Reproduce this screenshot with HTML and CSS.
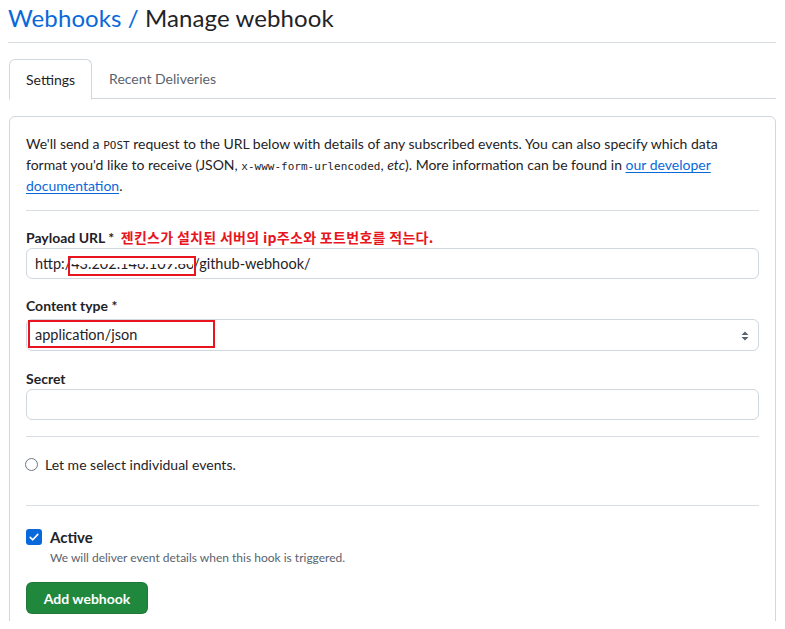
FILE: index.html
```html
<!DOCTYPE html>
<html>
<head>
<meta charset="utf-8">
<link rel="stylesheet" href="styles.css">
</head>
<body>
<div class="page">
  <h1 class="title"><span class="crumb">Webhooks /</span> Manage webhook</h1>
  <div class="tabs">
    <div class="tab active">Settings</div>
    <div class="tab">Recent Deliveries</div>
    <div class="tab-fill"></div>
  </div>
  <div class="box">
    <p class="intro">We'll send a <code>POST</code> request to the URL below with details of any subscribed events. You can also specify which data format you'd like to receive (JSON, <code>x-www-form-urlencoded</code>, <em>etc</em>). More information can be found in <a href="#">our developer documentation</a>.</p>
    <hr class="sep">
    <div class="group g1">
      <div class="label">Payload URL * <span class="note">젠킨스가 설치된 서버의 ip주소와 포트번호를 적는다.</span></div>
      <div class="input url">http:/<span class="ip"><span class="ip-text">43.202.146.109:8080</span><span class="mask"></span><span class="redbox"></span></span>/github-webhook/</div>
    </div>
    <div class="group g2">
      <div class="label">Content type *</div>
      <div class="input select"><span class="sel-val">application/json<span class="redbox2"></span></span>
        <svg class="caret" width="10" height="12" viewBox="0 0 10 12"><path d="M5 1.5 L8.5 5 H1.5 Z M1.5 7 H8.5 L5 10.5 Z" fill="#59636e"/></svg>
      </div>
    </div>
    <div class="group g3">
      <div class="label">Secret</div>
      <div class="input secret"></div>
    </div>
    <hr class="sep sep2">
    <div class="radio-row"><span class="radio"></span>Let me select individual events.</div>
    <hr class="sep sep3">
    <div class="check-row"><span class="check"><svg width="12" height="12" viewBox="0 0 12 12"><path d="M2.2 6.3 L4.8 8.8 L9.8 3.4" stroke="#fff" stroke-width="1.6" fill="none" stroke-linecap="round" stroke-linejoin="round"/></svg></span><span class="check-label">Active</span></div>
    <div class="desc">We will deliver event details when this hook is triggered.</div>
    <button class="btn">Add webhook</button>
  </div>
</div>
</body>
</html>
```
FILE: styles.css
```css
html, body { margin: 0; padding: 0; background: #fff; }
body {
  margin: 8px;
  font-family: "Lato", "Noto Sans", "Liberation Sans", "Noto Sans CJK KR", sans-serif;
  font-size: 14px;
  color: #1f2328;
  overflow: hidden;
  height: 613px;
}
.page { width: 768px; }
.title {
  margin: 0;
  font-size: 24px;
  font-weight: 400;
  line-height: 20px;
  padding: 0 0 14px 0;
  border-bottom: 1px solid #d8dee4;
  height: 20px;
  letter-spacing: 0.1px;
}
.crumb { color: #0969da; }
.tabs {
  display: flex;
  margin-top: 16px;
  height: 40px;
}
.tab {
  padding: 0 17px;
  line-height: 40px;
  color: #59636e;
  border-bottom: 1px solid #d0d7de;
  height: 39px;
}
.tab.active {
  color: #1f2328;
  border: 1px solid #d0d7de;
  border-bottom-color: transparent;
  border-radius: 6px 6px 0 0;
  margin-left: 1px;
  padding: 0 16px;
  height: 39px;
  line-height: 40px;
}
.tab-fill { flex: 1; border-bottom: 1px solid #d0d7de; }
.box {
  margin-top: 17px;
  margin-left: 1px;
  border: 1px solid #d0d7de;
  border-radius: 6px;
  padding: 16px;
  height: 600px;
}
.intro {
  margin: 0;
  line-height: 21px;
  font-size: 14px;
}
code {
  font-family: "DejaVu Sans Mono", "Liberation Mono", monospace;
  font-size: 11px;
  line-height: 1;
}
em { font-style: italic; }
a { color: #0969da; text-decoration: underline; text-underline-offset: 2px; }
.sep { border: 0; border-top: 1px solid #d8dee4; margin: 14px 0 0 0; height: 0; }
.label { font-weight: 700; line-height: 21px; height: 21px; }
.g1 { margin-top: 16px; }
.g2 { margin-top: 16px; }
.g2 .label { margin-bottom: 3px; }
.g3 { margin-top: 17px; }
.note {
  color: #e8141e;
  font-family: "Noto Sans CJK KR", sans-serif;
  font-weight: 700;
  font-size: 14px;
  margin-left: 3px;
  letter-spacing: 0.3px;
}
.input {
  box-sizing: border-box;
  height: 31px;
  width: 733px;
  border: 1px solid #d0d7de;
  border-radius: 6px;
  padding: 0 8px;
  line-height: 29px;
  position: relative;
  font-size: 14.5px;
}
.select { height: 32px; line-height: 30px; }
.secret { height: 31px; }
.url { color: #1f2328; display: flex; align-items: center; }
.ip {
  position: relative; display: inline-block; width: 122px; height: 29px;
  overflow: visible;
}
.ip-text { color: #1f2328; display: block; width: 122px; overflow: hidden; white-space: nowrap; }
.mask {
  position: absolute; left: 0; right: 0; top: 0; height: 15px; background: #fff;
}
.redbox {
  position: absolute; left: -3px; right: -3px; top: 7px; height: 20px;
  border: 2px solid #e8141e; box-sizing: border-box;
}
.sel-val { position: relative; display: inline-block; }
.redbox2 {
  position: absolute; left: -7px; width: 187px; top: 0px; height: 28px;
  border: 2px solid #e8141e; box-sizing: border-box;
}
.caret { position: absolute; right: 8px; top: 10px; }
.sep2 { margin: 16px 0 0 0; }
.radio-row {
  display: flex; align-items: center; height: 55px; line-height: 21px;
}
.radio {
  width: 11px; height: 11px; border: 1px solid #6e7781; border-radius: 50%;
  margin-right: 7px; margin-left: -1px;
}
.sep3 { margin: 13px 0 0 0; }
.check-row { display: flex; align-items: center; margin-top: 23px; height: 16px; }
.check {
  width: 16px; height: 16px; background: #0969da; border-radius: 3px;
  display: flex; align-items: center; justify-content: center; margin-right: 8px;
}
.check-label { font-weight: 700; font-size: 15px; }
.desc { font-size: 12px; color: #59636e; margin: 4px 0 0 24px; line-height: 18px; }
.btn {
  display: block;
  margin-top: 15px;
  background: #1f883d;
  color: #fff;
  border: 1px solid rgba(31,35,40,0.15);
  border-radius: 6px;
  font-family: inherit;
  font-weight: 700;
  font-size: 14px;
  height: 32px;
  width: 122px;
  padding: 0;
}
```
